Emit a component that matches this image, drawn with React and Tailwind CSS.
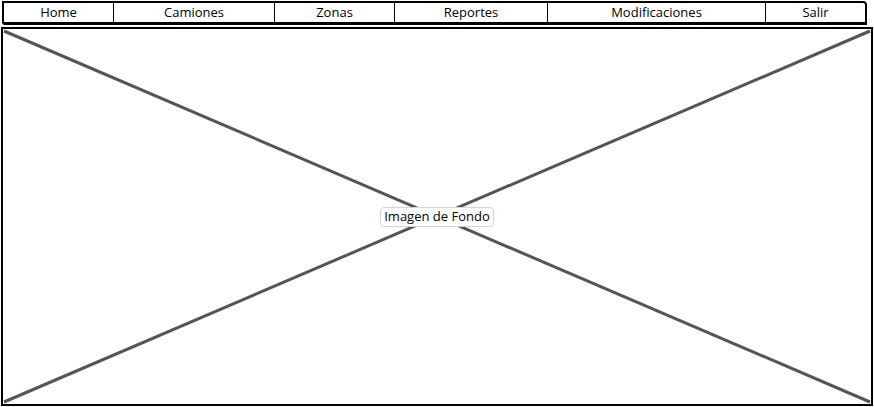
const tabs = [
  { label: "Home", w: "w-[110px]" },
  { label: "Camiones", w: "w-[161px]" },
  { label: "Zonas", w: "w-[120px]" },
  { label: "Reportes", w: "w-[153px]" },
  { label: "Modificaciones", w: "w-[218px]" },
  { label: "Salir", w: "flex-1" },
];

export default function App() {
  return (
    <div
      className="w-[874px] h-[407px] bg-white relative overflow-hidden"
      style={{ fontFamily: '"Open Sans", Lato, sans-serif' }}
    >
      {/* Tab bar */}
      <div className="ml-[2px] mt-[1px] w-[865px] h-[24px] flex border-t-2 border-x-2 border-b-[3px] border-black rounded-tr-[4px] rounded-bl-[3px]">
        {tabs.map((t, i) => (
          <div
            key={t.label}
            className={`${t.w} h-full flex items-center justify-center text-[13px] leading-none text-black ${
              i < tabs.length - 1 ? "border-r-[1.5px] border-black" : ""
            }`}
          >
            {t.label}
          </div>
        ))}
      </div>

      {/* Image placeholder */}
      <div className="ml-[1px] mt-[2px] w-[872px] h-[379px] border-2 border-black relative">
        <svg
          className="absolute inset-0 w-full h-full"
          viewBox="0 0 868 375"
          preserveAspectRatio="none"
        >
          <line x1="1" y1="2" x2="867" y2="373" stroke="#555" strokeWidth="3" />
          <line x1="867" y1="2" x2="1" y2="373" stroke="#555" strokeWidth="3" />
        </svg>
        <div className="absolute inset-0 flex items-center justify-center">
          <span className="bg-white border border-gray-300 rounded-[4px] px-[3px] h-[20px] flex items-center text-[13px] leading-none text-black">
            Imagen de Fondo
          </span>
        </div>
      </div>
    </div>
  );
}
